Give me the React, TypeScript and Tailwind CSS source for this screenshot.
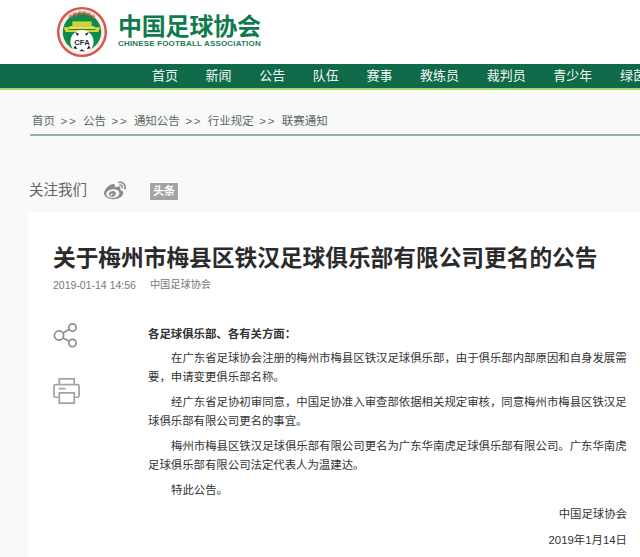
import { FaWeibo } from 'react-icons/fa';

const cjk = '"Liberation Sans", "Noto Sans CJK SC", sans-serif';

const navItems = ['首页', '新闻', '公告', '队伍', '赛事', '教练员', '裁判员', '青少年', '绿茵场'];
const crumbs = ['首页', '公告', '通知公告', '行业规定', '联赛通知'];

function Logo() {
  return (
    <svg width="52" height="52" viewBox="0 0 54 54" className="shrink-0">
      <circle cx="27" cy="27" r="26" fill="#d9534f" />
      <circle cx="27" cy="27" r="23.5" fill="#f4f1e4" />
      <circle cx="27" cy="27" r="20" fill="#0f8a4a" />
      <path d="M8 22 L46 22 L44 27 L10 27 Z" fill="#d8d93a" />
      <path d="M17 16 H37 V21 H17 Z" fill="#cfd23c" />
      <path d="M14 21 H40 V23 H14 Z" fill="#f0e25a" />
      <path d="M13 24 H41 V25 H13 Z" fill="#0f7a42" />
      <circle cx="27" cy="37" r="12" fill="#fff" />
      <path d="M20 27 L24 29 L22 31 Z M34 27 L30 29 L32 31 Z M18 44 L22 45 L20 41 Z M36 44 L32 45 L34 41 Z M24 47 L30 47 L27 45 Z" fill="#1c1c1c" />
      <text x="27" y="40" textAnchor="middle" fontSize="8" fontWeight="700" fill="#1b2a3a" fontFamily="Liberation Sans">
        CFA
      </text>
      <path id="arc" d="M7 25 A20.5 20.5 0 0 1 47 25" fill="none" />
      <text fontSize="4.5" fill="#d9534f" fontFamily="Noto Sans CJK SC" fontWeight="700">
        <textPath href="#arc" startOffset="50%" textAnchor="middle">
          中国足球协会
        </textPath>
      </text>
    </svg>
  );
}

function ShareIcon() {
  return (
    <svg width="26" height="26" viewBox="0 0 26 26" fill="none" stroke="#8f8f8f" strokeWidth="1.7">
      <circle cx="6" cy="13.5" r="4.6" />
      <circle cx="19.5" cy="5.5" r="3.7" />
      <circle cx="19.5" cy="21" r="3.7" />
      <path d="M10 11 L16.3 7.3 M10 16 L16.3 19.3" />
    </svg>
  );
}

function PrintIcon() {
  return (
    <svg width="27" height="27" viewBox="0 0 28 28" fill="none" stroke="#a3a3a3" strokeWidth="1.8">
      <path d="M6.5 8 V2 H22 V8" />
      <path d="M6 21 H2.5 a1.5 1.5 0 0 1 -1.5 -1.5 V9.5 A1.5 1.5 0 0 1 2.5 8 H25.5 A1.5 1.5 0 0 1 27 9.5 V19.5 A1.5 1.5 0 0 1 25.5 21 H22" />
      <path d="M6.5 16.5 H22 V27 H6.5 Z" />
      <path d="M6 12 H13" />
    </svg>
  );
}

export default function App() {
  return (
    <div className="w-[640px] h-[557px] overflow-hidden bg-[#f8f9f8] text-[#333]" style={{ fontFamily: cjk }}>
      <header className="h-[64px] bg-white flex items-center pl-[56px] gap-[10px]">
        <Logo />
        <div className="flex flex-col">
          <div className="text-[24px] leading-[24px] font-bold text-[#0f7a4c] tracking-[-0.2px]">中国足球协会</div>
          <div className="text-[8px] leading-[10px] font-bold text-[#1f7a55] tracking-[0.17px] whitespace-nowrap">
            CHINESE FOOTBALL ASSOCIATION
          </div>
        </div>
      </header>

      <nav className="h-[26px] bg-[#0f6a4a] border-b-2 border-[#a9d86c] flex items-center pl-[152px] gap-[27.6px] whitespace-nowrap text-[13px] text-[#f2f6f3]">
        {navItems.map((item) => (
          <span key={item}>{item}</span>
        ))}
      </nav>

      <div className="ml-[30px] mt-[22px] h-[24px] border-b-2 border-[#8fb3a8] pl-[2px] flex items-start text-[11.5px] leading-[18px] text-[#5b6b62] whitespace-nowrap">
        {crumbs.map((crumb, i) => (
          <span key={crumb} className="flex">
            <span>{crumb}</span>
            {i < crumbs.length - 1 && <span className="px-[5.5px] tracking-[1.75px]">&gt;&gt;</span>}
          </span>
        ))}
      </div>

      <div className="ml-[29px] mt-[44px] h-[22px] flex items-center text-[14.5px] text-[#666]">
        <span>关注我们</span>
        <FaWeibo className="ml-[17px] text-[22px] text-[#8a8a8a]" />
        <span className="ml-[24px] w-[28px] h-[17px] bg-[#a3a3a3] text-white text-[11px] leading-[17px] font-bold text-center rounded-[1px]">
          头条
        </span>
      </div>

      <main className="ml-[28px] mt-[10px] h-[400px] bg-white pl-[25px] pr-[13px] pt-[30px]">
        <h1 className="text-[22.7px] leading-[32px] font-bold text-[#2b2b2b] whitespace-nowrap">
          关于梅州市梅县区铁汉足球俱乐部有限公司更名的公告
        </h1>
        <div className="mt-[3px] flex text-[10.5px] leading-[16px] text-[#777]">
          <span>2019-01-14 14:56</span>
          <span className="ml-[14px] text-[10.2px]">中国足球协会</span>
        </div>

        <div className="mt-[23px] flex">
          <div className="w-[95px] shrink-0 flex flex-col pt-[6px]">
            <ShareIcon />
            <div className="mt-[29px]">
              <PrintIcon />
            </div>
          </div>
          <article className="flex-1 text-[11.4px] leading-[19.5px] text-[#333]">
            <p className="font-bold pt-[9px]">各足球俱乐部、各有关方面：</p>
            <p className="mt-[4px] indent-[23px]">
              在广东省足球协会注册的梅州市梅县区铁汉足球俱乐部，由于俱乐部内部原因和自身发展需要，申请变更俱乐部名称。
            </p>
            <p className="mt-[5px] indent-[23px]">
              经广东省足协初审同意，中国足协准入审查部依据相关规定审核，同意梅州市梅县区铁汉足球俱乐部有限公司更名的事宜。
            </p>
            <p className="mt-[5px] indent-[23px]">
              梅州市梅县区铁汉足球俱乐部有限公司更名为广东华南虎足球俱乐部有限公司。广东华南虎足球俱乐部有限公司法定代表人为温建达。
            </p>
            <p className="mt-[5px] indent-[23px]">特此公告。</p>
            <p className="mt-[5px] text-right">中国足球协会</p>
            <p className="mt-[6px] text-right">2019年1月14日</p>
          </article>
        </div>
      </main>
    </div>
  );
}
